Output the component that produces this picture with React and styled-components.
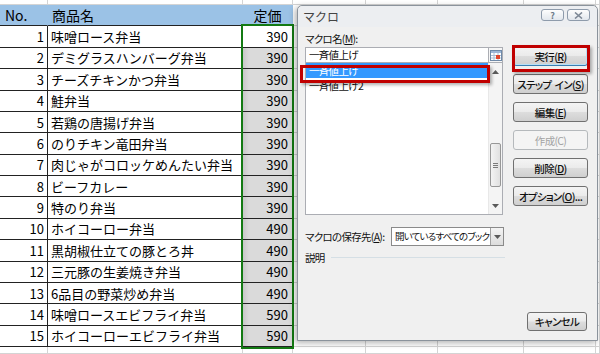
import React from 'react';
import styled, { createGlobalStyle, css } from 'styled-components';

const GlobalStyle = createGlobalStyle`
  html, body { margin: 0; padding: 0; }
  body {
    width: 600px;
    height: 354px;
    overflow: hidden;
    background: #fff;
    font-family: "Noto Sans CJK JP", "Noto Sans", sans-serif;
  }
`;

const COLS = [48, 195, 50, 73, 72, 86, 72, 4];
const ROW_H = 21.375;

const items = [
  [1, '味噌ロース弁当', 390],
  [2, 'デミグラスハンバーグ弁当', 390],
  [3, 'チーズチキンかつ弁当', 390],
  [4, '鮭弁当', 390],
  [5, '若鶏の唐揚げ弁当', 390],
  [6, 'のりチキン竜田弁当', 390],
  [7, '肉じゃがコロッケめんたい弁当', 390],
  [8, 'ビーフカレー', 390],
  [9, '特のり弁当', 390],
  [10, 'ホイコーロー弁当', 490],
  [11, '黒胡椒仕立ての豚とろ丼', 490],
  [12, '三元豚の生姜焼き弁当', 490],
  [13, '6品目の野菜炒め弁当', 490],
  [14, '味噌ロースエビフライ弁当', 590],
  [15, 'ホイコーローエビフライ弁当', 590],
];

const Screen = styled.div`
  position: relative;
  width: 600px;
  height: 354px;
  overflow: hidden;
`;

const Sheet = styled.div`
  display: flex;
  flex-direction: column;
`;

const SheetRow = styled.div`
  display: flex;
  flex: none;
  height: ${p => p.$h}px;
`;

const Cell = styled.div`
  box-sizing: border-box;
  flex: none;
  width: ${p => p.$w}px;
  display: flex;
  align-items: center;
  border-right: 1px solid #d4d4d4;
  border-bottom: 1px solid #d4d4d4;
  font-size: 13px;
  color: #000;
  white-space: nowrap;
  overflow: hidden;
  ${p => p.$kind === 'head' && css`
    background: #9bc2e6;
    border-right-color: #9bc2e6;
    border-bottom-color: #222;
    font-size: 14px;
  `}
  ${p => p.$kind === 'num' && css`
    justify-content: flex-end;
    padding-right: 3px;
    border-color: #222;
  `}
  ${p => p.$kind === 'name' && css`
    padding-left: 3px;
    border-color: #222;
  `}
  ${p => (p.$kind === 'price' || p.$kind === 'active') && css`
    justify-content: flex-end;
    padding-right: 4px;
    border-color: #222;
    background: linear-gradient(90deg, #c8c8c8 0, #dadada 6px);
  `}
  ${p => p.$kind === 'active' && css`
    background: #fff;
  `}
`;

const HeadText = styled.span`
  padding-left: ${p => p.$pad || 0}px;
  ${p => p.$center && css`
    flex: 1;
    text-align: center;
  `}
`;

const Selection = styled.div`
  position: absolute;
  left: 241px;
  top: 24px;
  width: 53px;
  height: 325px;
  box-sizing: border-box;
  border: 2px solid #137a13;
  pointer-events: none;
`;

const Dialog = styled.div`
  position: absolute;
  left: 297px;
  top: 5px;
  width: 301px;
  height: 336px;
  box-sizing: border-box;
  border: 1px solid #8b939c;
  border-radius: 5px 5px 0 0;
  background: #f0f0f0;
  box-shadow: -2px 2px 6px rgba(0, 0, 0, 0.3);
  display: flex;
  flex-direction: column;
  font-size: 10.5px;
  letter-spacing: -0.7px;
  font-feature-settings: "palt";
  color: #111;
`;

const TitleBar = styled.div`
  height: 21px;
  flex: none;
  display: flex;
  align-items: flex-start;
  padding: 3px 7px 0 5px;
  box-sizing: border-box;
  background: #eceef1;
  border-radius: 5px 5px 0 0;
`;

const Title = styled.div`
  flex: 1;
  font-size: 12px;
  line-height: 15px;
  letter-spacing: 0;
  color: #444;
  font-feature-settings: normal;
`;

const CaptionButton = styled.div`
  width: 23px;
  height: 12px;
  box-sizing: border-box;
  margin-left: 3px;
  border: 1px solid #8e9bab;
  border-radius: 3px;
  background: linear-gradient(#fdfdfd, #e2e7ed);
  display: flex;
  align-items: center;
  justify-content: center;
  font-size: 9px;
  font-weight: bold;
  letter-spacing: 0;
  color: #6f7b89;
  line-height: 1;
`;

const Client = styled.div`
  flex: 1;
  display: flex;
  flex-direction: column;
  padding: 5px 9px 9px 7px;
`;

const FieldLabel = styled.div`
  height: 14px;
  line-height: 14px;
  margin-bottom: 1px;
`;

const Body = styled.div`
  display: flex;
  gap: 10px;
`;

const LeftCol = styled.div`
  width: 198px;
  display: flex;
  flex-direction: column;
`;

const ButtonCol = styled.div`
  width: 75px;
  display: flex;
  flex-direction: column;
  gap: 8px;
  margin-top: -1px;
`;

const InputRow = styled.div`
  display: flex;
  height: 16px;
`;

const TextBox = styled.div`
  flex: 1;
  box-sizing: border-box;
  border: 1px solid #abadb3;
  border-right: none;
  background: #fff;
  padding-left: 3px;
  line-height: 14px;
`;

const RefButton = styled.div`
  width: 15px;
  box-sizing: border-box;
  border: 1px solid #abadb3;
  background: #f6f6f6;
  display: flex;
  align-items: center;
  justify-content: center;
`;

const ListBox = styled.div`
  height: 152px;
  box-sizing: border-box;
  border: 1px solid #abadb3;
  border-top: none;
  background: #fff;
  display: flex;
`;

const Items = styled.div`
  flex: 1;
  display: flex;
  flex-direction: column;
`;

const Item = styled.div`
  height: 15px;
  line-height: 15px;
  padding-left: 3px;
  ${p => p.$selected && css`
    background: #3399ff;
    color: #fff;
  `}
`;

const ScrollBar = styled.div`
  width: 13px;
  display: flex;
  flex-direction: column;
  background: #f4f4f4;
  border-left: 1px solid #e8e8e8;
`;

const ArrowBox = styled.div`
  height: 17px;
  flex: none;
  display: flex;
  align-items: center;
  justify-content: center;
`;

const Track = styled.div`
  flex: 1;
`;

const Thumb = styled.div`
  margin: 63px 1px 0;
  height: 44px;
  box-sizing: border-box;
  border: 1px solid #979797;
  border-radius: 2px;
  background: linear-gradient(90deg, #f3f3f3, #e0e0e0);
  display: flex;
  align-items: center;
  justify-content: center;
`;

const StorageRow = styled.div`
  margin-top: 12px;
  display: flex;
  align-items: center;
  height: 19px;
  white-space: nowrap;
`;

const StorageLabel = styled.div`
  width: 86px;
  flex: none;
`;

const Select = styled.div`
  width: 113px;
  flex: none;
  height: 19px;
  box-sizing: border-box;
  border: 1px solid #8a8a8a;
  background: #fff;
  display: flex;
  overflow: hidden;
`;

const SelectText = styled.div`
  flex: 1;
  padding-left: 3px;
  font-size: 9.5px;
  line-height: 17px;
  letter-spacing: -0.8px;
  white-space: nowrap;
`;

const SelectArrow = styled.div`
  width: 12px;
  flex: none;
  border-left: 1px solid #a0a0a0;
  background: linear-gradient(#f4f4f4, #dcdcdc);
  display: flex;
  align-items: center;
  justify-content: center;
`;

const DescRow = styled.div`
  margin-top: 4px;
  height: 14px;
  display: flex;
  align-items: center;
  gap: 6px;
  width: 200px;
`;

const Rule = styled.div`
  flex: 1;
  height: 1px;
  background: #d5dfe5;
`;

const Footer = styled.div`
  margin-top: auto;
  display: flex;
  justify-content: flex-end;
  padding-right: 1px;
`;

const Button = styled.div`
  box-sizing: border-box;
  height: ${p => p.$h || 20}px;
  width: ${p => (p.$w ? `${p.$w}px` : '100%')};
  display: flex;
  align-items: center;
  justify-content: center;
  border: 1px solid #707070;
  border-radius: 3px;
  background: linear-gradient(#f4f4f4 0%, #ebebeb 48%, #dddddd 52%, #cfcfcf 100%);
  color: #111;
  font-weight: 500;
  white-space: pre;
  ${p => p.$default && css`
    border-color: #3c7fb1;
    box-shadow: inset 0 0 0 1px #b7e0f7;
  `}
  ${p => p.$disabled && css`
    border-color: #b5b9bc;
    background: #f4f4f4;
    color: #a3a3a3;
    font-weight: normal;
  `}
`;

const RedBox = styled.div`
  position: absolute;
  left: ${p => p.$x}px;
  top: ${p => p.$y}px;
  width: ${p => p.$w}px;
  height: ${p => p.$h}px;
  box-sizing: border-box;
  border: 3px solid #c00000;
  box-shadow: 2px 2px 3px rgba(0, 0, 0, 0.3);
  pointer-events: none;
`;

function Arrow({ down }) {
  return (
    <svg width="7" height="4" viewBox="0 0 7 4">
      <path d={down ? 'M0 0h7L3.5 4z' : 'M0 4h7L3.5 0z'} fill="#5a5a5a" />
    </svg>
  );
}

function RefIcon() {
  return (
    <svg width="12" height="11" viewBox="0 0 12 11">
      <rect x="0.5" y="0.5" width="11" height="10" fill="#fff" stroke="#6f8aa8" />
      <rect x="1" y="1" width="10" height="2" fill="#9db6d6" />
      <path d="M4 3v7M8 3v7M1 5.5h10M1 8h10" stroke="#a9bcd3" strokeWidth="1" />
      <rect x="6" y="5" width="4" height="4" fill="#e0452b" />
    </svg>
  );
}

function Grip() {
  return (
    <svg width="5" height="5" viewBox="0 0 5 5">
      <path d="M0 0.5h5M0 2.5h5M0 4.5h5" stroke="#7a7a7a" strokeWidth="1" />
    </svg>
  );
}

function CloseGlyph() {
  return (
    <svg width="9" height="7" viewBox="0 0 9 7">
      <path d="M1 0.5l7 6M8 0.5l-7 6" stroke="#7d8896" strokeWidth="1.6" />
    </svg>
  );
}

function GridCells({ from }) {
  return COLS.slice(from).map((w, i) => <Cell key={i} $w={w} />);
}

function SpreadSheet() {
  return (
    <Sheet>
      <SheetRow $h={5}>
        <GridCells from={0} />
      </SheetRow>
      <SheetRow $h={ROW_H}>
        <Cell $w={COLS[0]} $kind="head"><HeadText $pad={5}>No.</HeadText></Cell>
        <Cell $w={COLS[1]} $kind="head"><HeadText $pad={4}>商品名</HeadText></Cell>
        <Cell $w={COLS[2]} $kind="head"><HeadText $center>定価</HeadText></Cell>
        <GridCells from={3} />
      </SheetRow>
      {items.map(([no, name, price], i) => (
        <SheetRow key={no} $h={ROW_H}>
          <Cell $w={COLS[0]} $kind="num">{no}</Cell>
          <Cell $w={COLS[1]} $kind="name">{name}</Cell>
          <Cell $w={COLS[2]} $kind={i === 0 ? 'active' : 'price'}>{price}</Cell>
          <GridCells from={3} />
        </SheetRow>
      ))}
      <SheetRow $h={7}>
        <GridCells from={0} />
      </SheetRow>
    </Sheet>
  );
}

function MacroDialog() {
  return (
    <Dialog>
      <TitleBar>
        <Title>マクロ</Title>
        <CaptionButton>?</CaptionButton>
        <CaptionButton><CloseGlyph /></CaptionButton>
      </TitleBar>
      <Client>
        <FieldLabel>マクロ名(<u>M</u>):</FieldLabel>
        <Body>
          <LeftCol>
            <InputRow>
              <TextBox>一斉値上げ</TextBox>
              <RefButton><RefIcon /></RefButton>
            </InputRow>
            <ListBox>
              <Items>
                <Item $selected>一斉値上げ</Item>
                <Item>一斉値上げ2</Item>
              </Items>
              <ScrollBar>
                <ArrowBox><Arrow /></ArrowBox>
                <Track>
                  <Thumb><Grip /></Thumb>
                </Track>
                <ArrowBox><Arrow down /></ArrowBox>
              </ScrollBar>
            </ListBox>
            <StorageRow>
              <StorageLabel>マクロの保存先(<u>A</u>):</StorageLabel>
              <Select>
                <SelectText>開いているすべてのブック</SelectText>
                <SelectArrow><Arrow down /></SelectArrow>
              </Select>
            </StorageRow>
            <DescRow>
              <span>説明</span>
              <Rule />
            </DescRow>
          </LeftCol>
          <ButtonCol>
            <Button $default>実行(<u>R</u>)</Button>
            <Button>{'ステップ  イン('}<u>S</u>)</Button>
            <Button>編集(<u>E</u>)</Button>
            <Button $disabled>作成(C)</Button>
            <Button>削除(<u>D</u>)</Button>
            <Button>オプション(<u>O</u>)...</Button>
          </ButtonCol>
        </Body>
        <Footer>
          <Button $w={60} $h={19}>キャンセル</Button>
        </Footer>
      </Client>
      <RedBox $x={2} $y={59} $w={190} $h={18} />
      <RedBox $x={214} $y={39} $w={78} $h={27} />
    </Dialog>
  );
}

export default function App() {
  return (
    <Screen>
      <GlobalStyle />
      <SpreadSheet />
      <Selection />
      <MacroDialog />
    </Screen>
  );
}
